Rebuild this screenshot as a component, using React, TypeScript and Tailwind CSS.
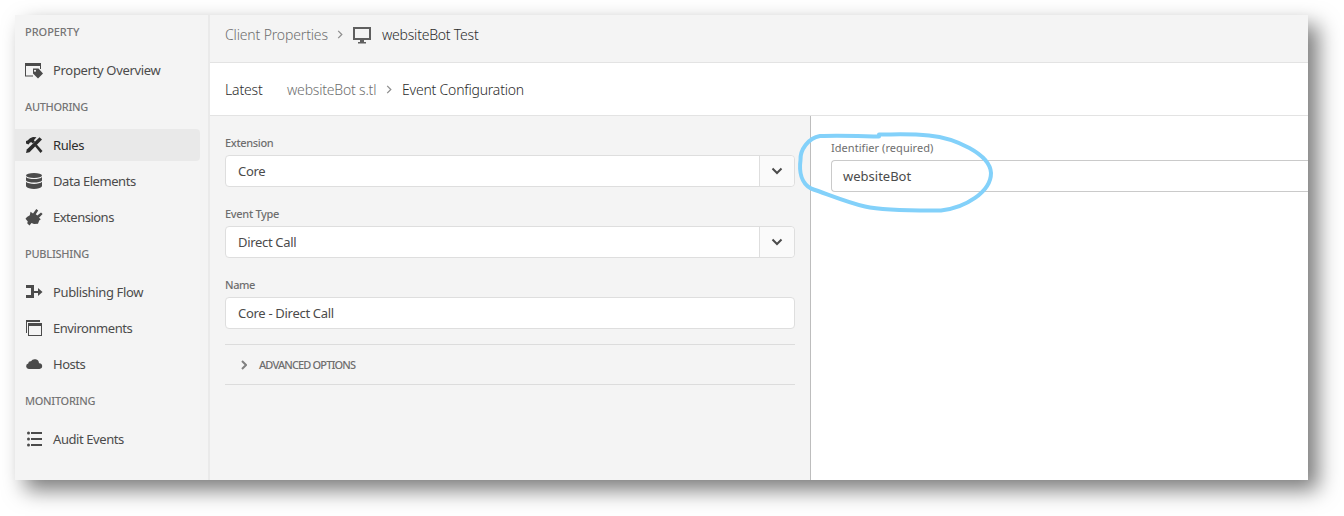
import type { ReactNode } from "react";

const svg = "h-[18px] w-[18px] shrink-0 fill-current";

const OverviewIcon = () => (
  <svg viewBox="0 0 18 18" className={svg}>
    <path d="M0 2h16v6h-1V5H1v9.500h7v1H0z" />
    <path fillRule="evenodd" d="M8 7.500h5.500L18 12.500 13 17.500 8 12.500zM10 8.800a1 1 0 1 0 .01 0z" />
  </svg>
);
const RulesIcon = () => (
  <svg viewBox="0 0 18 18" className={svg}>
    <path d="M11.500 1.200 8 1 5 2.200 2.500 4.500 1 5v2.500L3.500 8.500 5 6.500l1.500-.3 1.300 1.300L10 5.500 8.800 4.200z" />
    <path d="M10 10.300 11.800 8.600 17.500 15 15.500 17z" />
    <path d="M14.500 1.200 17 3.500 4.500 16.200 1 17l.8-3.500z" />
  </svg>
);
const DataIcon = () => (
  <svg viewBox="0 0 18 18" className={svg}>
    <ellipse cx="9" cy="3.500" rx="8" ry="2.600" />
    <path d="M1 5C3 7.700 15 7.700 17 5V8.500C15 11.200 3 11.200 1 8.500zM1 9.800C3 12.600 15 12.600 17 9.800V14.200C15 17.800 3 17.800 1 14.200z" />
  </svg>
);
const PlugIcon = () => (
  <svg viewBox="0 0 18 18" className={svg}>
    <path d="M5.500 3.800 8 5.600 11.300 1 13.200 2.400 10.800 6.200 12.300 7.600 16 4.400 17.600 6 14 9.800 15.800 11.300 14.200 12.500 13 15.800 9 16 6.500 15 4.500 17.500 2.200 15.200 2.800 13.500.500 10.800 2 9 4.800 7.200z" />
  </svg>
);
const FlowIcon = () => (
  <svg viewBox="0 0 18 18" className={svg}>
    <path d="M1 2h8v6h4V5l4.500 4-4.500 4v-3H9v5H1v-3h5V5H1z" />
  </svg>
);
const EnvironmentsIcon = () => (
  <svg viewBox="0 0 18 18" className={svg}>
    <path d="M1 1h14v2H2v11H1z" />
    <path fillRule="evenodd" d="M3 4h14v13H3zM4 7v9h12V7z" />
  </svg>
);
const CloudIcon = () => (
  <svg viewBox="0 0 18 18" className={svg}>
    <path d="M3.800 14a2.800 2.800 0 0 1-.6-5.500A2.500 2.500 0 0 1 6 6.300 4.300 4.300 0 0 1 14 8.200 2.900 2.900 0 0 1 14.500 14z" />
  </svg>
);
const ListIcon = () => (
  <svg viewBox="0 0 18 18" className={svg}>
    <circle cx="3.500" cy="3" r="1.500" />
    <circle cx="3.500" cy="9" r="1.500" />
    <circle cx="3.500" cy="15" r="1.500" />
    <path d="M6 2h11v2H6zM6 8h11v2H6zM6 14h11v2H6z" />
  </svg>
);
const MonitorIcon = () => (
  <svg viewBox="0 0 18 18" className="h-[18px] w-[18px] shrink-0 fill-[#5f5f5f]">
    <path fillRule="evenodd" d="M0 1h18v13h-7v2h2v1.500H5V16h2v-2H0zM2 3v9h14V3z" />
  </svg>
);

const ChevronRight = ({ className }: { className: string }) => (
  <svg viewBox="0 0 6 10" className={className} fill="none" stroke="currentColor">
    <path d="M1 1l4 4-4 4" />
  </svg>
);

const Heading = ({ children, className }: { children: ReactNode; className: string }) => (
  <h2 className={"flex items-center pl-[10px] text-[11px] font-medium text-[#757575] " + className}>{children}</h2>
);

const Item = ({ icon, label, active, spacing }: { icon: ReactNode; label: string; active?: boolean; spacing: string }) => (
  <a
    className={
      "flex h-8 w-[185px] items-center gap-[10px] rounded-r pl-[10px] text-[13px] " +
      (active ? "bg-[#e9e9e9] text-[#2c2c2c]" : "text-[#4b4b4b]")
    }
  >
    {icon}
    <span className={"whitespace-nowrap pt-[2px] " + spacing}>{label}</span>
  </a>
);

const Label = ({ children, className }: { children: ReactNode; className: string }) => (
  <label className={"flex h-6 items-center whitespace-nowrap text-[11px] text-[#6e6e6e] " + className}>{children}</label>
);

const Select = ({ value }: { value: string }) => (
  <div className="flex h-8 rounded border border-[#dedede] bg-white text-[13px] text-[#4b4b4b]">
    <span className="flex flex-1 items-center pl-3 pt-[2px] tracking-[-0.32px]">{value}</span>
    <button className="flex w-[35px] items-center justify-center rounded-r border-l border-[#dedede] bg-[#fafafa]">
      <svg viewBox="0 0 12 8" className="h-2 w-3" fill="none" stroke="#4b4b4b" strokeWidth="2">
        <path d="M1.500 1.500 6 6l4.500-4.500" />
      </svg>
    </button>
  </div>
);

export default function App() {
  return (
    <div className="h-[516px] w-[1344px] overflow-hidden bg-white pl-[15px] pt-[15px] font-['Noto_Sans',sans-serif]">
      <div className="relative h-[465px] w-[1293px] shadow-[10px_10px_20px_rgba(0,0,0,0.52)]">
        <div className="flex h-full overflow-hidden bg-[#f4f4f4]">
          <nav className="w-[195px] shrink-0 border-r-2 border-[#eaeaea]">
            <Heading className="h-[39px] pb-[5px] tracking-[-0.05px]">PROPERTY</Heading>
            <Item icon={<OverviewIcon />} label="Property Overview" spacing="tracking-[-0.32px]" />
            <Heading className="h-[43px] pb-px tracking-[-0.3px]">AUTHORING</Heading>
            <div className="flex flex-col gap-1">
              <Item active icon={<RulesIcon />} label="Rules" spacing="tracking-[-0.4px]" />
              <Item icon={<DataIcon />} label="Data Elements" spacing="tracking-[-0.45px]" />
              <Item icon={<PlugIcon />} label="Extensions" spacing="tracking-[-0.5px]" />
            </div>
            <Heading className="h-[43px] pb-px tracking-[-0.25px]">PUBLISHING</Heading>
            <div className="flex flex-col gap-1">
              <Item icon={<FlowIcon />} label="Publishing Flow" spacing="tracking-[-0.37px]" />
              <Item icon={<EnvironmentsIcon />} label="Environments" spacing="tracking-[-0.45px]" />
              <Item icon={<CloudIcon />} label="Hosts" spacing="tracking-[-0.5px]" />
            </div>
            <Heading className="h-[43px] pb-px tracking-[-0.3px]">MONITORING</Heading>
            <Item icon={<ListIcon />} label="Audit Events" spacing="tracking-[-0.42px]" />
          </nav>

          <div className="flex min-w-0 flex-1 flex-col">
            <header className="flex h-12 shrink-0 items-center whitespace-nowrap border-b border-[#e3e3e3] pb-[8px] pl-[15px] text-[14px] font-light">
              <span className="w-[103px] tracking-[-0.15px] text-[#6e6e6e]">Client Properties</span>
              <ChevronRight className="ml-[9px] h-[9px] w-[6px] stroke-[1.4] text-[#8e8e8e]" />
              <span className="ml-[10px] flex">
                <MonitorIcon />
              </span>
              <span className="ml-[11px] tracking-[-0.22px] text-[#2c2c2c]">websiteBot Test</span>
            </header>
            <div className="flex h-[53px] shrink-0 items-center whitespace-nowrap border-b border-[#e3e3e3] bg-white pl-[15px] text-[14px] font-light">
              <span className="w-[62px] tracking-[-0.15px] text-[#2c2c2c]">Latest</span>
              <span className="w-[90px] tracking-[-0.2px] text-[#6e6e6e]">websiteBot s.tl</span>
              <ChevronRight className="ml-[9px] h-[9px] w-[6px] stroke-[1.4] text-[#8e8e8e]" />
              <span className="ml-[10px] tracking-[-0.2px] text-[#2c2c2c]">Event Configuration</span>
            </div>
            <div className="flex min-h-0 flex-1">
              <section className="w-[601px] shrink-0 border-r border-[#bdbdbd] pl-[15px] pr-[15px] pt-[15px]">
                <Label className="font-medium tracking-[-0.35px]">Extension</Label>
                <Select value="Core" />
                <Label className="mt-[15px] font-medium tracking-[-0.3px]">Event Type</Label>
                <Select value="Direct Call" />
                <Label className="mt-[15px] font-medium tracking-[-0.4px]">Name</Label>
                <div className="flex h-8 items-center rounded border border-[#dedede] bg-white pl-3 pt-[2px] text-[13px] tracking-[-0.3px] text-[#4b4b4b]">
                  Core - Direct Call
                </div>
                <div className="mt-[15px] flex h-[41px] items-center border-y border-[#dcdcdc] pl-4 text-[11px] text-[#6e6e6e]">
                  <ChevronRight className="h-[10px] w-[6px] stroke-2 text-[#808080]" />
                  <span className="ml-3 pt-[2px] font-medium tracking-[-0.85px]">ADVANCED OPTIONS</span>
                </div>
              </section>
              <section className="min-w-0 flex-1 overflow-hidden bg-white pl-5 pt-5">
                <Label className="tracking-[0.05px]">Identifier (required)</Label>
                <div className="flex h-8 items-center rounded-l border border-r-0 border-[#cacaca] pl-[11px] pt-[2px] text-[13px] text-[#4b4b4b]">
                  websiteBot
                </div>
              </section>
            </div>
          </div>
        </div>
        <svg
          viewBox="795 125 205 92"
          className="absolute left-[780px] top-[110px] h-[92px] w-[205px]"
          fill="none"
          stroke="#83d1fa"
          strokeWidth="4"
          strokeLinecap="square"
          strokeLinejoin="round"
        >
          <path d="M879 136.500C858 136 838 135 820 136C808 138 800 150 800.500 160C799 171 801 183 811 188.500C830 195 846 202 865 206.500C885 211 915 210.500 941 210.500C965 208 991 192 991 173C990 154 955 138 929 135.500C910 133.500 895 134.500 879 134.500Z" />
        </svg>
      </div>
    </div>
  );
}
